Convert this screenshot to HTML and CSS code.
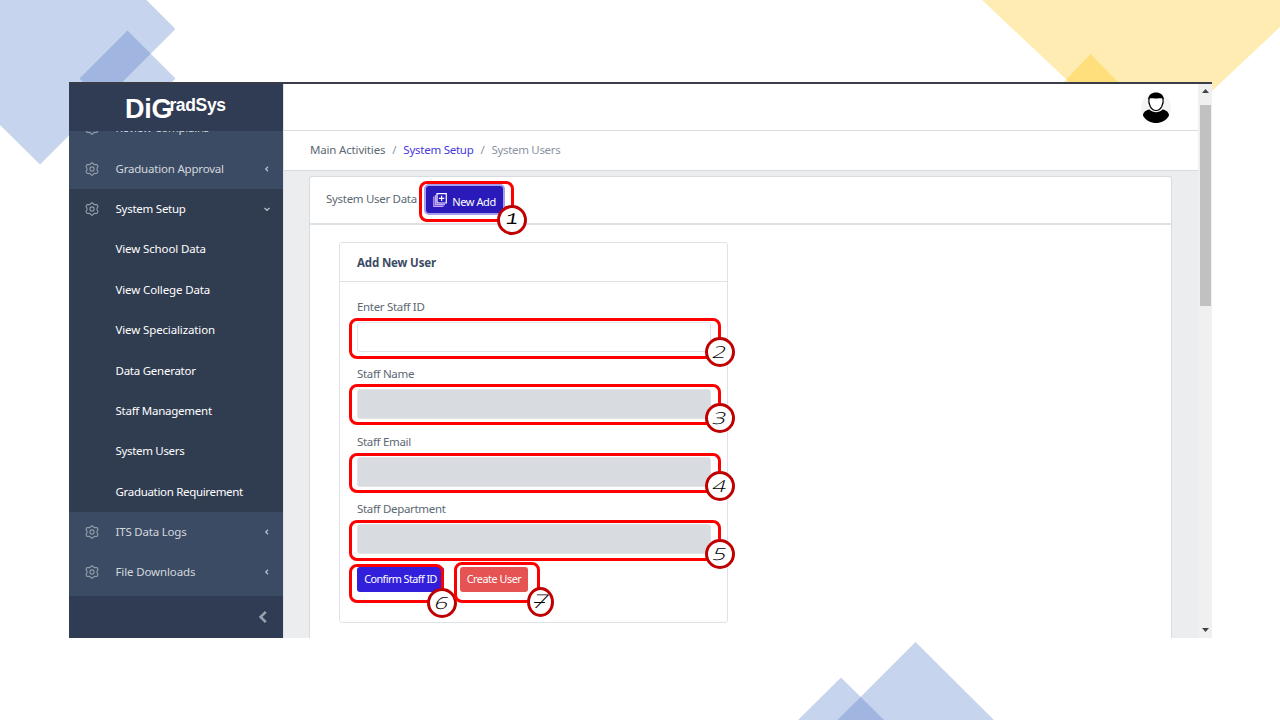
FILE: index.html
```html
<!DOCTYPE html>
<html lang="en">
<head>
<meta charset="utf-8">
<title>DiGradSys - System Users</title>
<link rel="stylesheet" href="styles.css">
</head>
<body>
<svg class="backdrop" viewBox="0 0 1280 720" width="1280" height="720">
  <g fill="#4472c4" fill-opacity=".3">
    <path d="M0 0H146.500L175.500 29L40 164.500L0 125Z"/>
    <path d="M127.500 30.500L175.500 78.500L127.500 126.500L79.500 78.500Z"/>
    <path d="M798 720L841 677.500L884 720Z"/>
    <path d="M837.500 720L915.500 642L994 720Z"/>
  </g>
  <g fill="#ffc000" fill-opacity=".3">
    <path d="M982 0H1280V27L1212 91L1120 130Z"/>
    <path d="M1090.500 54L1120 84H1062Z"/>
  </g>
</svg>
<svg class="defs" width="0" height="0">
  <symbol id="gear" viewBox="0 0 14 14">
    <path d="M5.300 2L7 .6L8.700 2L9.300 2.600L11.900 2.500L13 4.400L12 6.200V7.800L13 9.600L11.900 11.500L9.300 11.400L8.700 12L7 13.400L5.300 12L4.700 11.400L2.100 11.500L1 9.600L2 7.800V6.200L1 4.400L2.100 2.500L4.700 2.600Z"/>
    <circle cx="7" cy="7" r="2.100"/>
  </symbol>
  <symbol id="left" viewBox="0 0 6 6"><path d="M4 .8L1.800 3L4 5.200"/></symbol>
  <symbol id="down" viewBox="0 0 6 6"><path d="M.5 2L3 4.300L5.500 2"/></symbol>
</svg>
<div class="window">
  <nav class="sidebar">
    <div class="brand"><span class="brand-big">DiG</span><span class="brand-small">radSys</span></div>
    <div class="menu">
      <div class="item first"><svg class="gear"><use href="#gear"/></svg><span>Review Complains</span></div>
      <div class="item"><svg class="gear"><use href="#gear"/></svg><span class="snug">Graduation Approval</span><svg class="caret"><use href="#left"/></svg></div>
      <div class="group">
        <div class="item"><svg class="gear"><use href="#gear"/></svg><span>System Setup</span><svg class="caret down"><use href="#down"/></svg></div>
        <div class="item sub"><span class="loose">View School Data</span></div>
        <div class="item sub"><span class="loose">View College Data</span></div>
        <div class="item sub"><span class="loose">View Specialization</span></div>
        <div class="item sub"><span>Data Generator</span></div>
        <div class="item sub"><span>Staff Management</span></div>
        <div class="item sub"><span class="tight">System Users</span></div>
        <div class="item sub"><span class="tight">Graduation Requirement</span></div>
      </div>
      <div class="item"><svg class="gear"><use href="#gear"/></svg><span class="snug">ITS Data Logs</span><svg class="caret"><use href="#left"/></svg></div>
      <div class="item"><svg class="gear"><use href="#gear"/></svg><span class="loose">File Downloads</span><svg class="caret"><use href="#left"/></svg></div>
    </div>
    <div class="minimizer"><svg width="10" height="14" viewBox="0 0 10 14"><path d="M7.800 1.800L2.600 7L7.800 12.200"/></svg></div>
  </nav>
  <main class="main">
    <header class="topbar">
      <svg width="30" height="32" viewBox="0 0 30 32">
        <circle cx="15" cy="16" r="15" fill="#f3f3f3"/>
        <path d="M8.500 17.500C4 18.200 2 21 2 23.500C5 29 10 31 15 31S25 29 28 23.500C28 21 26 18.200 21.500 17.500C18 21 12 21 8.500 17.500Z" fill="#000"/>
        <path d="M8 6C7 12 10 18.500 15 18.500S23 12 22 6C20 2 10 2 8 6Z" fill="#fff" stroke="#000" stroke-width="1.200"/>
        <path d="M7.500 8C7 2.500 11 .6 15 .6S23 2.500 22.500 8C21 5.500 20 6.500 15 6.500S9 5.500 7.500 8Z" fill="#000"/>
      </svg>
    </header>
    <div class="crumbs"><span>Main Activities</span><i>/</i><a>System Setup</a><i>/</i><span class="muted">System Users</span></div>
    <section class="page">
      <div class="card">
        <div class="card-head"><span>System User Data</span>
          <button class="btn add"><svg width="14" height="14" viewBox="0 0 14 14"><path d="M4 .7H13.300V10H4ZM8.600 2.800V8M6 5.400H11.300"/><path d="M2.500 2V11.600H12M.8 3.500V13.300H10.500" stroke="#c9a9f5"/></svg><span>New Add</span></button>
        </div>
        <div class="card-body">
          <form class="form-card">
            <h2>Add New User</h2>
            <div class="fields">
              <label>Enter Staff ID</label><div class="input"></div>
              <label>Staff Name</label><div class="input off"></div>
              <label>Staff Email</label><div class="input off"></div>
              <label>Staff Department</label><div class="input off"></div>
              <div class="actions"><button type="button" class="btn primary">Confirm Staff ID</button><button type="button" class="btn danger">Create User</button></div>
            </div>
          </form>
        </div>
      </div>
    </section>
  </main>
  <div class="scrollbar"><svg width="7" height="4" viewBox="0 0 7 4"><path d="M3.500 0L7 4H0Z"/></svg><div class="thumb"></div><svg class="end" width="7" height="4" viewBox="0 0 7 4"><path d="M0 0H7L3.500 4Z"/></svg></div>
</div>
<div class="mark m1"><b><i>1</i></b></div>
<div class="mark m2"><b><i>2</i></b></div>
<div class="mark m3"><b><i>3</i></b></div>
<div class="mark m4"><b><i>4</i></b></div>
<div class="mark m5"><b><i>5</i></b></div>
<div class="mark m6"><b><i>6</i></b></div>
<div class="mark m7"><b><i>7</i></b></div>
</body>
</html>
```
FILE: styles.css
```css
*{box-sizing:border-box}
body{margin:0;width:1280px;height:720px;overflow:hidden;position:relative;background:#fff;font:11.5px/16px "Noto Sans","Open Sans",sans-serif;letter-spacing:-.25px;color:#5c6873;padding:82px 68px 0 69px}
.backdrop{position:absolute;left:0;top:0}
.defs{position:absolute}
.window{position:relative;display:flex;height:556px;border-top:2px solid #3a3d47;background:#fff}
.sidebar{width:214px;display:flex;flex-direction:column;background:#3c4b64;flex:none}
.brand{height:47px;background:#303c54;color:#fff;font-family:"Liberation Sans",Arial,sans-serif;font-weight:bold;display:flex;padding-left:56px;flex:none}
.brand-big{font-size:27px;line-height:50px;letter-spacing:-.2px}
.brand-small{font-size:17.500px;line-height:42px;margin-left:-3px;letter-spacing:-.35px}
.menu{height:465px;overflow:hidden;flex:none}
.item{height:40.4px;display:flex;align-items:center;padding:0 13px 0 16px;color:#d3d7de}
.first{margin-top:-23px}
.item span{flex:1;white-space:nowrap}
.item .loose{letter-spacing:-.13px}
.item .snug{letter-spacing:-.2px}
.item .tight{letter-spacing:-.32px}
.gear{width:14px;height:14px;margin-right:16.500px;fill:none;stroke:#939cab;stroke-width:1.100}
.caret{width:6px;height:6px;fill:none;stroke:#b5bcc7;stroke-width:1.300}
.group{background:#303c50}
.group .item{color:#fff}
.item.sub{padding-left:46.500px}
.minimizer{flex:1;background:#303c54;display:flex;align-items:center;justify-content:flex-end;padding-right:15px}
.minimizer path{fill:none;stroke:#98a0ae;stroke-width:2.600}
.main{width:915px;border-left:1px solid #e1e3e6;display:flex;flex-direction:column}
.topbar{height:47px;border-bottom:1px solid #d8dbe0;display:flex;justify-content:flex-end;align-items:center;padding:1px 27px 0 0}
.crumbs{height:40px;border-bottom:1px solid #d8dbe0;display:flex;align-items:center;padding:0 0 1px 26px;white-space:nowrap}
.crumbs span:first-child{letter-spacing:-.17px}
.crumbs i{font-style:normal;color:#8a93a2;width:18px;text-align:center}
.crumbs a{color:#4638df}
.muted{color:#8a93a2;letter-spacing:-.32px}
.page{flex:1;background:#ebedef;padding:5px 26px 0 25px;display:flex}
.card{flex:1;background:#fff;border:1px solid #d8dbe0;border-bottom:0;border-radius:3px 3px 0 0}
.card-head{height:48px;border-bottom:2px solid #dfe1e5;display:flex;align-items:center;padding:0 0 1px 16px}
.card-head>span{width:100px;letter-spacing:-.3px;white-space:nowrap;padding-bottom:2px}
.btn{border:0;border-radius:3px;color:#fff;font:inherit;letter-spacing:inherit;display:flex;align-items:center;justify-content:center;padding:0;white-space:nowrap}
.add{width:77px;height:27px;background:#2a1ab9;box-shadow:0 0 0 2px #a79fee;gap:5px;font-size:11px;letter-spacing:-.4px}
.add span{padding-top:4px}
.add svg{fill:none;stroke:#fff;stroke-width:1.200}
.card-body{padding:17px 30px 0 29px}
.form-card{width:389px;height:381px;border:1px solid #dfe2e6;border-radius:3px}
h2{margin:0;height:39px;border-bottom:1px solid #dfe2e6;padding-left:17px;font-size:11.500px;line-height:39px;letter-spacing:-.15px;color:#3c4b64}
.fields{padding:17px 16px 0 17px;display:flex;flex-direction:column}
.fields label{height:23px;line-height:16px;letter-spacing:-.32px}
.input{height:30px;border:1px solid #e2e4e8;border-radius:3px;margin-bottom:14.400px}
.off{background:#d8dbe0}
.actions{display:flex;gap:16px;margin-top:-2px}
.primary,.danger{height:25px;font-size:10.800px;letter-spacing:-.55px}
.primary{width:87px;background:#321fdb}
.danger{width:68px;background:#e55353;letter-spacing:-.45px}
.scrollbar{width:14px;background:#f0f0f0;display:flex;flex-direction:column;align-items:center;padding:5px 0 6px}
.scrollbar svg{fill:#444}
.thumb{width:11px;height:201px;background:#c1c1c1;margin-top:12px}
.end{margin-top:auto}
.mark{position:absolute;border:3px solid #f00;border-radius:8px}
.mark b{position:absolute;width:30px;height:30px;right:-17px;bottom:-11px;border:3px solid #c00000;border-radius:50%;background:#fff;color:#000;font:300 16.500px/23px "Open Sans","Noto Sans",sans-serif;letter-spacing:0;text-align:center}
.mark i{display:block;font-style:normal;transform:scaleX(1.45) skewX(-11deg)}
.mark.m1 b{right:-16px;bottom:-16px}
.mark.m1 i{font-family:"Liberation Mono",monospace;transform:scaleX(1.2) skewX(-8deg)}
.mark.m6 b{right:-16px;bottom:-18px}
.mark.m7 b{width:27px;right:-17px;bottom:-17px}
.mark.m7 i{font-size:19px;transform:scaleX(1.35) skewX(-15deg)}
.m7 i::after{content:"";position:absolute;left:6px;top:12px;width:8px;height:1px;background:#000}
.m1{left:419px;top:181px;width:95px;height:41px}
.m2{left:349px;top:318px;width:372px;height:41px}
.m3{left:349px;top:384px;width:372px;height:41px}
.m4{left:349px;top:453px;width:372px;height:40px}
.m5{left:349px;top:520px;width:372px;height:41px}
.m6{left:349px;top:564px;width:95px;height:39px}
.m7{left:454px;top:562px;width:86px;height:41px}
```
